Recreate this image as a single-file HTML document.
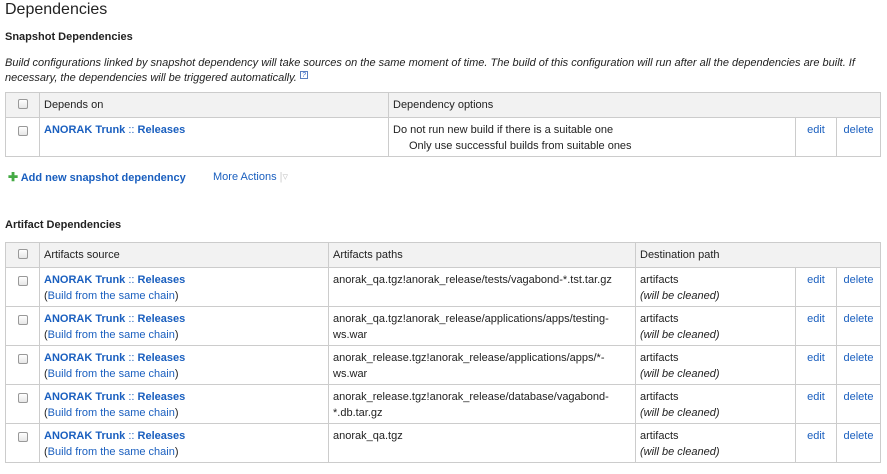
<!DOCTYPE html>
<html><head><style>
*{margin:0;padding:0;box-sizing:border-box}
body{width:887px;height:474px;background:#fff;font-family:"Liberation Sans",Arial,sans-serif;font-size:11px;color:#222;position:relative;overflow:hidden}
.a{position:absolute}
h1{position:absolute;left:5px;top:1px;font-size:16px;font-weight:normal;color:#222}
h2{position:absolute;left:5px;font-size:11px;font-weight:bold;color:#222}
p.i{position:absolute;left:5px;top:56px;width:860px;font-style:italic;line-height:15px;color:#222}
table{position:absolute;left:5px;width:875px;border-collapse:collapse;table-layout:fixed}
td,th{border:1px solid #ccc;vertical-align:top;text-align:left;font-weight:normal;padding:4px 4px 0;line-height:16px}
th{background:#f2f2f2;height:25px;padding:0 4px;vertical-align:middle}
td{height:39px}
.cb{text-align:center;padding:7px 0 0}
th.cb{padding:2px 0 0}
.box{display:inline-block;width:10px;height:10px;border:1px solid #999;border-radius:2px;background:linear-gradient(#fff,#e6e6e6)}
a{color:#1a5fbf;text-decoration:none}
.c{text-align:center}
.it{font-style:italic}
.q{display:inline-block;width:8px;height:8px;border:1px solid #5a7fc0;font-size:7px;line-height:7px;text-align:center;color:#36c;vertical-align:top}
</style></head><body>
<h1>Dependencies</h1>
<h2 style="top:31px">Snapshot Dependencies</h2>
<p class="i">Build configurations linked by snapshot dependency will take sources on the same moment of time. The build of this configuration will run after all the dependencies are built. If necessary, the dependencies will be triggered automatically. <span class="q">?</span></p>
<table style="top:92px">
<colgroup><col style="width:34px"><col style="width:349px"><col style="width:407px"><col style="width:41px"><col style="width:44px"></colgroup>
<tr><th class="cb"><span class="box"></span></th><th>Depends on</th><th colspan="3">Dependency options</th></tr>
<tr><td class="cb"><span class="box"></span></td><td><a href="#"><b>ANORAK Trunk</b> :: <b>Releases</b></a></td><td>Do not run new build if there is a suitable one<br><span style="padding-left:16px">Only use successful builds from suitable ones</span></td><td class="c"><a href="#">edit</a></td><td class="c"><a href="#">delete</a></td></tr>
</table>
<div class="a" style="left:8px;top:170px;font-weight:bold"><span style="color:#4a4;font-size:12px">✚</span> <a href="#" style="font-weight:bold">Add new snapshot dependency</a></div>
<div class="a" style="left:213px;top:170px"><a href="#">More Actions</a> <span style="color:#ccc">|▿</span></div>
<h2 style="top:219px">Artifact Dependencies</h2>
<table style="top:242px">
<colgroup><col style="width:34px"><col style="width:289px"><col style="width:307px"><col style="width:160px"><col style="width:41px"><col style="width:44px"></colgroup>
<tr><th class="cb"><span class="box"></span></th><th>Artifacts source</th><th>Artifacts paths</th><th colspan="3">Destination path</th></tr>
<tr><td class="cb"><span class="box"></span></td><td><a href="#"><b>ANORAK Trunk</b> :: <b>Releases</b></a><br>(<a href="#">Build from the same chain</a>)</td><td>anorak_qa.tgz!anorak_release/tests/vagabond-*.tst.tar.gz</td><td>artifacts<br><span class="it">(will be cleaned)</span></td><td class="c"><a href="#">edit</a></td><td class="c"><a href="#">delete</a></td></tr>
<tr><td class="cb"><span class="box"></span></td><td><a href="#"><b>ANORAK Trunk</b> :: <b>Releases</b></a><br>(<a href="#">Build from the same chain</a>)</td><td>anorak_qa.tgz!anorak_release/applications/apps/testing-<br>ws.war</td><td>artifacts<br><span class="it">(will be cleaned)</span></td><td class="c"><a href="#">edit</a></td><td class="c"><a href="#">delete</a></td></tr>
<tr><td class="cb"><span class="box"></span></td><td><a href="#"><b>ANORAK Trunk</b> :: <b>Releases</b></a><br>(<a href="#">Build from the same chain</a>)</td><td>anorak_release.tgz!anorak_release/applications/apps/*-<br>ws.war</td><td>artifacts<br><span class="it">(will be cleaned)</span></td><td class="c"><a href="#">edit</a></td><td class="c"><a href="#">delete</a></td></tr>
<tr><td class="cb"><span class="box"></span></td><td><a href="#"><b>ANORAK Trunk</b> :: <b>Releases</b></a><br>(<a href="#">Build from the same chain</a>)</td><td>anorak_release.tgz!anorak_release/database/vagabond-<br>*.db.tar.gz</td><td>artifacts<br><span class="it">(will be cleaned)</span></td><td class="c"><a href="#">edit</a></td><td class="c"><a href="#">delete</a></td></tr>
<tr><td class="cb"><span class="box"></span></td><td><a href="#"><b>ANORAK Trunk</b> :: <b>Releases</b></a><br>(<a href="#">Build from the same chain</a>)</td><td>anorak_qa.tgz</td><td>artifacts<br><span class="it">(will be cleaned)</span></td><td class="c"><a href="#">edit</a></td><td class="c"><a href="#">delete</a></td></tr>
</table>
</body></html>
